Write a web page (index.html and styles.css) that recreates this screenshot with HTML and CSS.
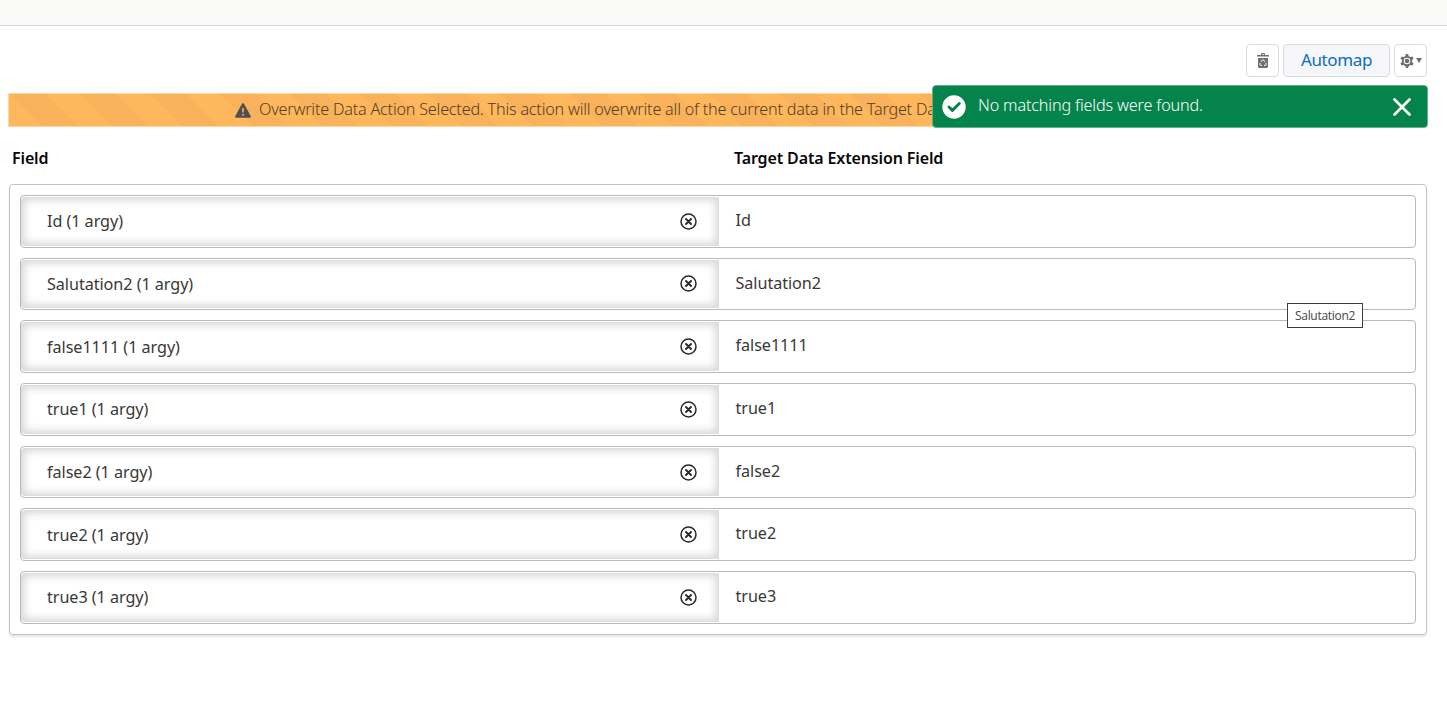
FILE: index.html
```
<!DOCTYPE html>
<html lang="en">
<head>
<meta charset="utf-8">
<title>Field Mapping</title>
<link rel="stylesheet" href="styles.css">
</head>
<body>
<header class="topbar"></header>
<main class="page">
  <div class="toolbar">
    <button class="btn btn-icon" aria-label="Clear mapping">
      <svg width="12" height="15" viewBox="0 0 12 15"><path fill="#706e6b" fill-rule="evenodd" d="M4 2V1q0-1 1-1h2q1 0 1 1v1h3.500q.5 0 .5.5v1H0v-1q0-.5.5-.5zM5 1.200V2h2v-.8zM1 5h10v8.500q0 1.500-1.500 1.500h-7Q1 15 1 13.500z"/><path d="M4.200 8.800 5.500 6.900h1l1.300 1.900M8.800 9.900l.6 1.200-.7 1.200H7M5 12.300H3.300l-.7-1.200.6-1.200" fill="none" stroke="#fff" stroke-width="1"/></svg>
    </button>
    <button class="btn btn-main"><span>Automap</span></button>
    <button class="btn btn-icon btn-gear" aria-label="Settings">
      <svg width="14" height="14" viewBox="0 0 14 14"><g fill="#706e6b"><rect x="5.500" y="0" width="3" height="14" rx="1"/><rect x="5.500" y="0" width="3" height="14" rx="1" transform="rotate(60 7 7)"/><rect x="5.500" y="0" width="3" height="14" rx="1" transform="rotate(120 7 7)"/><circle cx="7" cy="7" r="5.200"/></g><circle cx="7" cy="7" r="3.300" fill="#fff"/><circle cx="7" cy="7" r="2.300" fill="#706e6b"/></svg>
      <svg width="6" height="5" viewBox="0 0 6 5"><path d="M0 0h6L3 5z" fill="#706e6b"/></svg>
    </button>
  </div>
  <div class="alert">
    <svg width="16" height="15" viewBox="0 0 16 15"><path d="M7.100.6q.9-1.200 1.800 0l6.900 12.600q.4 1.300-.8 1.500H1Q-.2 14.500.2 13.200z" fill="#514f4d"/><path d="M8 5v4.500M8 11v1.700" stroke="#fdb55c" stroke-width="1.500"/></svg>
    <span class="alert-text">Overwrite Data Action Selected. This action will overwrite all of the current data in the Target Data</span>
  </div>
  <div class="toast">
    <svg class="toast-check" width="24" height="24" viewBox="0 0 24 24"><circle cx="12" cy="12" r="11.700" fill="#fff"/><path d="m7 12 3.400 3.400L17.300 8.500" fill="none" stroke="#04844b" stroke-width="2.900" stroke-linecap="round" stroke-linejoin="round"/></svg>
    <span class="toast-text">No matching fields were found.</span>
    <svg class="toast-close" width="18" height="18" viewBox="0 0 18 18"><path d="m1.500 1.500 15 15m0-15-15 15" stroke="#fff" stroke-width="2.700" stroke-linecap="round"/></svg>
  </div>
  <div class="heads"><h2><span class="h-field">Field</span></h2><h2><span class="h-target">Target Data Extension Field</span></h2></div>
  <section class="panel" id="rows"></section>
</main>
<div class="tooltip">Salutation2</div>
<script src="rows.js"></script>
</body>
</html>
```
FILE: styles.css
```
* { box-sizing: border-box; }
body { margin: 0; height: 713px; overflow: hidden; background: #fff; color: #3a3836; font: 400 16.2px/24px "Noto Sans", "Open Sans", sans-serif; letter-spacing: -.06px; }
.topbar { height: 26px; background: #fafaf9; border-bottom: 1px solid #d8d6d5; }
.page { position: relative; padding: 18px 20px 0 8px; }
.toolbar { display: flex; justify-content: flex-end; gap: 4px; height: 33px; }
.btn { height: 33px; border: 1px solid #dddbda; border-radius: 4px; background: #fff; padding: 0; display: flex; align-items: center; justify-content: center; font: 400 17px "Noto Sans", sans-serif; }
.btn-icon { width: 33px; }
.btn-icon svg { display: block; }
.btn-gear { gap: 2px; }
.btn-main { width: 107px; padding-bottom: 2px; background: #f4f6f9; color: #0b6cbf; letter-spacing: -.35px; }
.alert { margin-top: 16px; height: 34px; padding-left: 225.500px; display: flex; align-items: center; gap: 8.500px; overflow: hidden; white-space: nowrap; border: 1px solid #ffd6a2; color: #514021; background: repeating-linear-gradient(45deg, #ffb75d 0 23.500px, #f9b25b 23.500px 48.250px, #ffb75d 48.250px 49.500px); }
.alert svg, .toast svg { flex: none; }
.alert-text { margin-top: -2px; font-weight: 300; letter-spacing: -.21px; }
.toast { position: absolute; left: 932px; top: 59px; width: 496px; height: 43px; display: flex; align-items: center; padding: 0 16px 0 9px; border: 1px solid #5db28a; border-radius: 4px; background: #04844b; color: #fff; }
.toast-text { margin: -3px auto 0 12px; font-weight: 300; letter-spacing: -.15px; }
.heads { display: grid; grid-template-columns: 722px 1fr; padding-left: 4px; margin-top: 20px; height: 37px; }
.heads h2 { margin: 0; font: 600 16px/23px "Noto Sans", sans-serif; color: #080707; letter-spacing: -.13px; }
.panel { display: flex; flex-direction: column; gap: 10.200px; margin-left: .5px; width: 1418.500px; height: 451px; padding: 10px; border: 1px solid #c2c2c2; border-radius: 4px; box-shadow: 0 2px 2px rgba(0,0,0,.1); }
.row { display: grid; grid-template-columns: 698.500px 1fr; height: 52.500px; flex: none; border: 1px solid #b9b9b9; border-radius: 4px; }
.source { display: flex; align-items: center; justify-content: space-between; margin: 1px 0; padding: 0 21px 0 25.500px; border: 1px solid #dddde1; border-radius: 3px 0 0 3px; box-shadow: inset 0 0 8px 2px rgba(0,0,0,.17); }
.target { padding: 12px 16.500px; }
.tooltip { position: absolute; left: 1287px; top: 303px; width: 76px; height: 25px; border: 1px solid #3c3c3c; background: #fff; text-align: center; font: 400 12px/23px "Open Sans", sans-serif; letter-spacing: -.3px; color: #484848; }
```
FILE: rows.js
```
const names = ["Id", "Salutation2", "false1111", "true1", "false2", "true2", "true3"];
document.getElementById("rows").innerHTML = names.map(n => `
<div class="row"><div class="source"><span>${n} (1 argy)</span>
<svg width="17" height="17" viewBox="0 0 17 17" fill="none" stroke="#2b2826"><circle cx="8.500" cy="8.500" r="7.500" stroke-width="1.500"/><path d="m6 6 5 5m0-5-5 5" stroke-width="1.900" stroke-linecap="round"/></svg></div>
<div class="target"><span>${n}</span></div></div>`).join("");
```
